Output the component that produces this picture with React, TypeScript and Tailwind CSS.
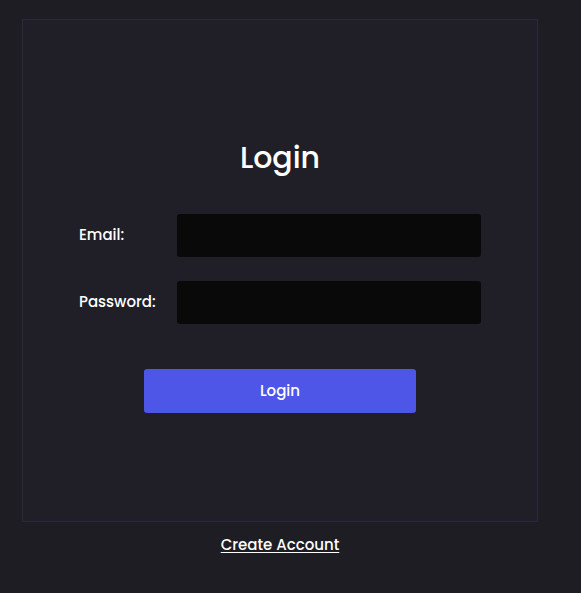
export default function App() {
  return (
    <div className="min-h-[593px] w-full bg-[#1e1d23] pt-[19px] font-['Poppins','Inter',sans-serif] text-white">
      <div className="ml-[22px] flex h-[503px] w-[516px] flex-col items-center border border-[#29283d] bg-[#201f27] px-[56px] pt-[120px]">
        <h1 className="text-[30px] leading-[36px] font-medium">Login</h1>
        <form className="mt-[38px] flex w-full flex-col gap-[24px]">
          <div className="flex items-center">
            <label className="w-[98px] text-[15px] font-medium">Email:</label>
            <input type="email" className="h-[43px] flex-1 rounded-[3px] bg-[#09090a] px-3 text-sm outline-none" />
          </div>
          <div className="flex items-center">
            <label className="w-[98px] text-[15px] font-medium">Password:</label>
            <input type="password" className="h-[43px] flex-1 rounded-[3px] bg-[#09090a] px-3 text-sm outline-none" />
          </div>
          <button
            type="button"
            className="mx-auto mt-[21px] h-[44px] w-[272px] rounded-[3px] bg-[#4e56e7] text-[15px] font-medium"
          >
            Login
          </button>
        </form>
      </div>
      <div className="ml-[22px] flex w-[516px] justify-center pt-[11px]">
        <a href="#" className="text-[15px] leading-6 font-medium underline underline-offset-2">
          Create Account
        </a>
      </div>
    </div>
  );
}
